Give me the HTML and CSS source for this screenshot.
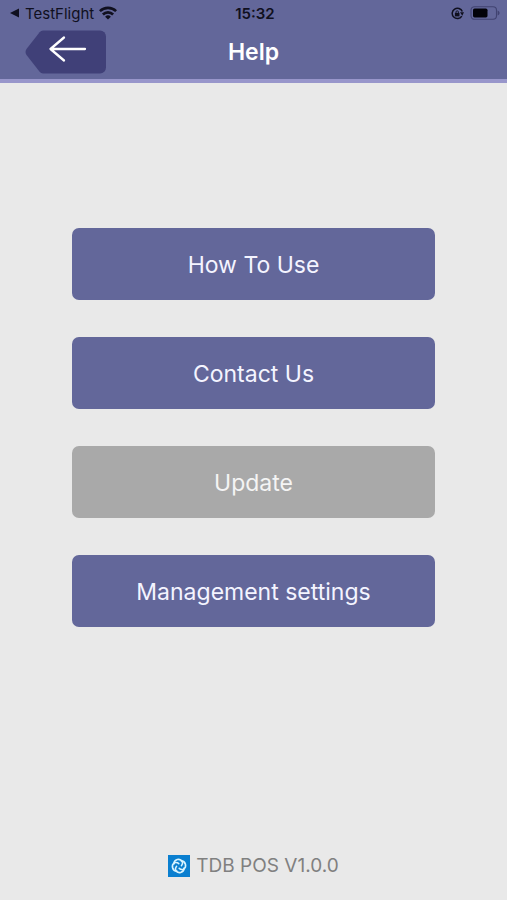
FILE: index.html
```html
<!DOCTYPE html>
<html lang="en">
<head>
<meta charset="utf-8">
<meta name="viewport" content="width=device-width, initial-scale=1">
<title>Help</title>
<link rel="stylesheet" href="styles.css">
</head>
<body>
<header class="header">
  <div class="status">
    <a class="status-app" href="#">
      <svg width="10" height="10" viewBox="0 0 10 10" aria-hidden="true"><path d="M0 5 9 .5v9z"/></svg>
      <span>TestFlight</span>
      <svg width="18" height="14" viewBox="0 0 18 14" aria-hidden="true"><g fill="none" stroke="currentColor" stroke-width="2.6"><path d="M.9 5.2a11.5 11.5 0 0 1 16.2 0"/><path d="M3.9 8.5a7.2 7.2 0 0 1 10.2 0"/></g><path d="M9 13.6 6.1 10.7a4.1 4.1 0 0 1 5.8 0z"/></svg>
    </a>
    <span class="status-time">15:32</span>
    <span class="status-power">
      <svg width="13" height="13" viewBox="0 0 13 13" aria-hidden="true"><path d="M10.8 9.2A5.2 5.2 0 1 1 11.3 4.6" fill="none" stroke="currentColor" stroke-width="1.5"/><path d="M9 5.2H13l-1.7 3.6z"/><path d="M3.9 5.9h4.6v3.5H3.9z"/><path d="M5 6.2V5a1.2 1.2 0 0 1 2.4 0v1.2" fill="none" stroke="currentColor" stroke-width=".9"/></svg>
      <svg width="30" height="14" viewBox="0 0 30 14" aria-hidden="true"><rect x="1" y=".7" width="25.5" height="12.6" rx="3.5" fill="none" stroke="#414371" stroke-width="1.1"/><rect x="3" y="2.6" width="14.5" height="8.8" rx="1.6" fill="#020208"/><path d="M27.6 4.6c2.6.8 2.6 4 0 4.8z" fill="#414371"/></svg>
    </span>
  </div>
  <div class="nav">
    <button class="back" type="button" aria-label="Back">
      <svg width="82" height="44" viewBox="0 0 82 44" aria-hidden="true"><path d="M18 .5h57a6 6 0 0 1 6 6v31a6 6 0 0 1-6 6H18q-2 0-3.4-1.7L1.5 25q-2-3 0-6L14.6 2.2Q16 .5 18 .5z" fill="#404078"/><path d="M60 19H25.5M39 7.5 25.5 19 39 30.5" fill="none" stroke="#fff" stroke-width="2.3" stroke-linecap="round" stroke-linejoin="round"/></svg>
    </button>
    <h1 class="title">Help</h1>
  </div>
</header>
<main class="menu">
  <button class="item" type="button">How To Use</button>
  <button class="item" type="button">Contact Us</button>
  <button class="item" type="button" disabled>Update</button>
  <button class="item" type="button">Management settings</button>
</main>
<footer class="footer">
  <svg width="22" height="22" viewBox="0 0 22 22" aria-hidden="true"><rect width="22" height="22" fill="#0a7fd0"/><g fill="none" stroke="#d9f4ff" stroke-width="1.6" stroke-linecap="round" transform="rotate(-15 11 11)"><path id="petal" d="M6.6 7.6A4.6 4.6 0 0 1 15.4 7.600Q15.400 10.200 13.400 11.400"/><use href="#petal" transform="rotate(90 11 11)"/><use href="#petal" transform="rotate(180 11 11)"/><use href="#petal" transform="rotate(270 11 11)"/></g></svg>
  <span>TDB POS V1.0.0</span>
</footer>
</body>
</html>
```
FILE: styles.css
```css
* {
  box-sizing: border-box;
}

body {
  display: flex;
  flex-direction: column;
  min-height: 100vh;
  margin: 0;
  background: #e9e9e9;
  font-family: Inter, "Liberation Sans", sans-serif;
}

.header {
  background: #63679a;
  border-bottom: 4px solid #9896cb;
}

.status {
  display: grid;
  grid-template-columns: 1fr auto 1fr;
  align-items: center;
  height: 28px;
  padding: 0 7px 2px 10px;
  color: #10101f;
  font-size: 15px;
}

.status svg {
  fill: currentColor;
}

.status-app,
.status-power {
  display: flex;
  align-items: center;
  gap: 5px;
}

.status-app {
  color: inherit;
  text-decoration: none;
}

.status-time {
  font-weight: 600;
}

.status-power {
  justify-content: flex-end;
  gap: 6px;
}

.nav {
  display: grid;
  grid-template-columns: 1fr auto 1fr;
  align-items: center;
  height: 51px;
  padding: 0 25px 4px;
}

.back {
  display: block;
  justify-self: start;
  padding: 0;
  border: 0;
  background: none;
}

.back svg {
  display: block;
}

.title {
  margin: 0;
  color: #fff;
  font-size: 23px;
  font-weight: 600;
}

.menu {
  display: flex;
  flex: 1;
  flex-direction: column;
  gap: 37px;
  padding: 145px 72px 40px;
}

.item {
  height: 72px;
  padding: 2px 6px 0;
  border: 0;
  border-radius: 7px;
  background: #63679a;
  color: #f4f4ff;
  font-family: inherit;
  font-size: 23px;
}

.item:disabled {
  background: #a9a9a9;
  color: #f4f4f4;
}

.footer {
  display: flex;
  align-items: center;
  justify-content: center;
  gap: 6px;
  padding-bottom: 22px;
  color: #808080;
  font-size: 19px;
  line-height: 24px;
}
```
